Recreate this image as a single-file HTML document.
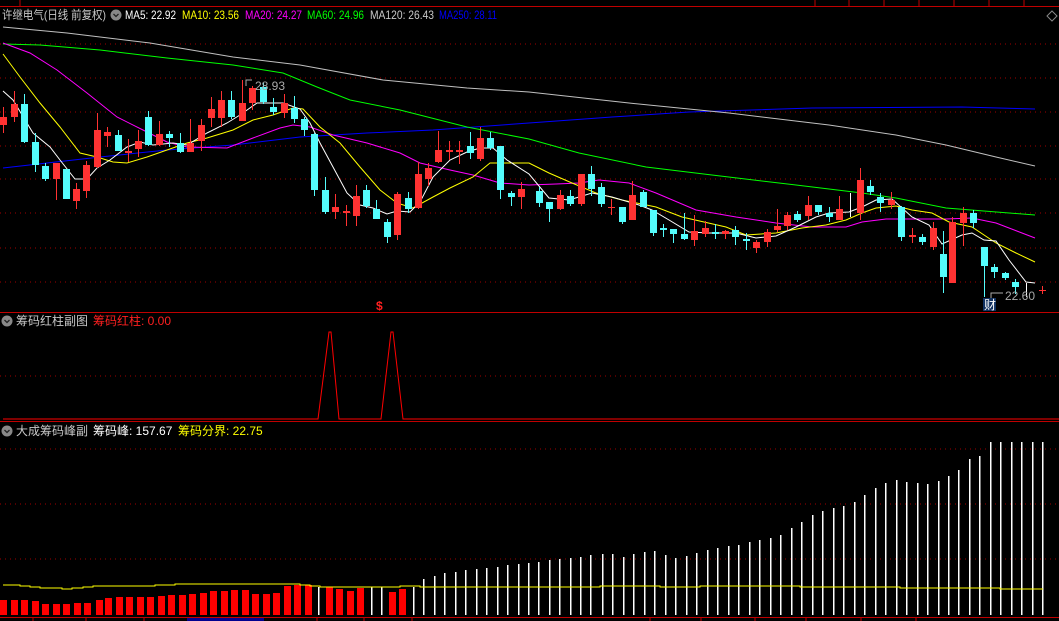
<!DOCTYPE html>
<html><head><meta charset="utf-8">
<style>
html,body{margin:0;padding:0;background:#000;width:1059px;height:621px;overflow:hidden}
svg{display:block}
text{font-family:"Liberation Sans","Noto Sans CJK SC",sans-serif;font-size:12px}
</style></head>
<body>
<svg id="s" width="1059" height="621" xmlns="http://www.w3.org/2000/svg">
<rect width="1059" height="621" fill="#000"/>
<line x1="0" y1="6.5" x2="1059" y2="6.5" stroke="#c00000" stroke-width="1"/>
<line x1="20" y1="0" x2="20" y2="6" stroke="#c00000"/>
<g stroke="#c00000"><line x1="815" y1="0" x2="815" y2="6"/><line x1="849" y1="0" x2="849" y2="6"/><line x1="884" y1="0" x2="884" y2="6"/><line x1="919" y1="0" x2="919" y2="6"/><line x1="954" y1="0" x2="954" y2="6"/><line x1="989" y1="0" x2="989" y2="6"/><line x1="1024" y1="0" x2="1024" y2="6"/></g>
<polygon points="1052,11 1057,16 1052,21 1047,16" fill="none" stroke="#888"/>
<text x="2" y="19" fill="#c8c8c8" font-size="13" textLength="104" lengthAdjust="spacingAndGlyphs">许继电气(日线 前复权)</text>
<circle cx="116" cy="15" r="5.5" fill="#888"/>
<polyline points="113.5,14 116,16.5 118.5,14" fill="none" stroke="#222" stroke-width="1.3"/>
<text x="125" y="19" fill="#fff" textLength="51" lengthAdjust="spacingAndGlyphs">MA5: 22.92</text>
<text x="182" y="19" fill="#ffff00" textLength="57" lengthAdjust="spacingAndGlyphs">MA10: 23.56</text>
<text x="245" y="19" fill="#ff00ff" textLength="57" lengthAdjust="spacingAndGlyphs">MA20: 24.27</text>
<text x="307" y="19" fill="#00ff00" textLength="57" lengthAdjust="spacingAndGlyphs">MA60: 24.96</text>
<text x="370" y="19" fill="#c8c8c8" textLength="64" lengthAdjust="spacingAndGlyphs">MA120: 26.43</text>
<text x="439" y="19" fill="#0000ff" textLength="58" lengthAdjust="spacingAndGlyphs">MA250: 28.11</text>
<g id="grid"></g>
<g id="lines"></g>
<g id="candles"></g>
<polyline points="246,86 246,80 252,80" fill="none" stroke="#aaa"/>
<text x="255" y="90" fill="#aaa">28.93</text>
<polyline points="991,298 991,293 1003,293" fill="none" stroke="#aaa"/>
<text x="1005" y="300" fill="#aaa">22.60</text>
<rect x="983" y="298" width="13" height="13" fill="#103060"/>
<text x="984" y="309" fill="#fff" font-size="11">财</text>
<text x="376" y="310" fill="#ff2020" font-size="11" font-weight="bold">$</text>
<line x1="0" y1="312.5" x2="1059" y2="312.5" stroke="#c00000"/>
<circle cx="7" cy="321" r="5.5" fill="#888"/>
<polyline points="4.5,320 7,322.5 9.5,320" fill="none" stroke="#222" stroke-width="1.3"/>
<text x="16" y="325" fill="#c8c8c8" font-size="13">筹码红柱副图</text>
<text x="93" y="325" fill="#ff2020" font-size="13">筹码红柱: 0.00</text>
<line x1="0" y1="376" x2="1059" y2="376" stroke="#a00000" stroke-dasharray="1,4"/>
<polyline points="3,419 318,419 329,332 331,332 339,419 381,419 391,332 393,332 403,419 1059,419" fill="none" stroke="#ff0000" stroke-width="1"/>
<line x1="0" y1="421.5" x2="1059" y2="421.5" stroke="#c00000"/>
<circle cx="7" cy="431" r="5.5" fill="#888"/>
<polyline points="4.5,430 7,432.5 9.5,430" fill="none" stroke="#222" stroke-width="1.3"/>
<text x="16" y="435" fill="#c8c8c8" font-size="13">大成筹码峰副</text>
<text x="93" y="435" fill="#fff" font-size="13">筹码峰: 157.67</text>
<text x="178" y="435" fill="#ffff00" font-size="13">筹码分界: 22.75</text>
<g stroke="#a00000" stroke-dasharray="1,4"><line x1="0" y1="449" x2="1059" y2="449"/><line x1="0" y1="504" x2="1059" y2="504"/><line x1="0" y1="559" x2="1059" y2="559"/></g>
<g id="bars"></g>
<polyline points="3,585 20,585 20,586 30,586 30,587 40,587 40,588 62,588 62,589 72,589 72,588 83,588 83,587 93,587 93,586 155,586 155,585 175,585 175,584 300,584 300,585 310,585 310,586 320,586 320,587 400,587 400,586 420,586 420,587 600,587 600,586 660,586 660,587 700,587 700,586 800,586 800,587 900,587 900,588 1000,588 1000,589 1043,589" fill="none" stroke="#ffff00" stroke-width="1"/>
<line x1="0" y1="617.5" x2="1059" y2="617.5" stroke="#c00000"/>
<g stroke="#c00000"><line x1="33" y1="617" x2="33" y2="621"/><line x1="86" y1="617" x2="86" y2="621"/><line x1="144" y1="617" x2="144" y2="621"/><line x1="317" y1="617" x2="317" y2="621"/><line x1="364" y1="617" x2="364" y2="621"/><line x1="412" y1="617" x2="412" y2="621"/><line x1="650" y1="617" x2="650" y2="621"/><line x1="701" y1="617" x2="701" y2="621"/><line x1="755" y1="617" x2="755" y2="621"/><line x1="806" y1="617" x2="806" y2="621"/><line x1="861" y1="617" x2="861" y2="621"/><line x1="916" y1="617" x2="916" y2="621"/></g>
<rect x="187" y="618" width="77" height="3" fill="#000090"/>
</svg>
<script>
var NS="http://www.w3.org/2000/svg";
function el(p,t,a){var e=document.createElementNS(NS,t);for(var k in a)e.setAttribute(k,a[k]);p.appendChild(e);return e;}
var g=document.getElementById('grid');
[44,78,112,146,179,213,248,282].forEach(function(y){el(g,'line',{x1:0,y1:y,x2:1059,y2:y,stroke:'#a00000','stroke-dasharray':'1,4'});});
var L=document.getElementById('lines');
function pl(pts,c){el(L,'polyline',{points:pts,fill:'none',stroke:c,'stroke-width':1});}
pl("3,168 100,157 167,150 233,145 300,137 367,133 433,130 529,123 612,117 689,112 812,108 962,107 1035,109","#0000ff");
pl("3,27 67,33 150,43 233,57 300,65 383,80 467,88 529,92 629,103 729,113 829,125 896,135 946,145 996,157 1035,166","#c0c0c0");
pl("3,44 40,45 100,50 167,58 233,65 283,73 317,87 350,100 400,110 467,127 529,139 579,153 646,167 712,175 796,185 862,193 896,198 946,208 1035,215","#00ff00");
pl("3,43 30,53 57,70 87,93 117,117 143,130 167,142 187,147 227,148 253,138 280,128 293,125 310,127 333,135 367,143 400,153 420,163 450,170 473,175 500,183 529,185 556,184 579,183 599,180 629,183 656,193 696,210 736,217 776,223 812,227 846,227 862,222 886,219 946,219 972,218 996,223 1035,238","#ff00ff");
pl("3,54 20,77 40,103 60,127 80,153 97,157 113,162 127,163 147,157 167,150 187,143 207,138 233,130 253,120 273,115 293,108 303,109 320,127 340,143 360,167 380,190 397,203 413,208 433,197 450,188 473,177 490,163 510,163 529,163 549,173 572,183 596,193 622,200 656,207 682,217 726,227 746,235 776,233 802,228 826,225 846,220 862,213 876,208 896,206 912,210 932,213 949,222 972,227 996,243 1016,253 1035,262","#ffff00");
pl("3,91 13,100 33,133 50,147 60,160 75,179 87,179 97,168 110,160 127,147 140,142 153,145 173,143 187,145 207,133 227,123 240,115 257,103 270,103 283,103 300,109 310,123 320,143 333,167 347,193 360,205 373,208 387,214 397,211 410,212 420,202 433,177 450,160 467,152 480,148 493,148 507,160 529,174 549,198 569,200 592,193 612,197 639,205 652,210 669,220 689,232 709,233 736,233 756,238 776,236 796,227 816,217 829,213 849,212 862,207 876,200 892,199 912,217 929,225 942,244 962,235 972,233 984,240 996,241 1009,260 1026,282 1035,283","#ffffff");
var C=[
[3,117,125,107,133,'r'],[14,104,117,91,122,'r'],[24,104,142,94,143,'c'],[35,142,165,133,172,'c'],[45,166,179,163,181,'c'],[56,163,179,163,200,'r'],[66,169,199,169,199,'c'],[76,189,201,183,209,'r'],[86,165,191,161,198,'r'],[97,130,167,113,168,'r'],
[107,132,136,127,147,'r'],[118,135,151,130,151,'c'],[128,151,153,139,162,'r'],[138,141,149,130,157,'r'],[148,117,145,111,146,'c'],[159,134,145,121,146,'r'],[169,134,138,131,147,'c'],[180,143,152,133,153,'c'],[190,143,152,119,152,'r'],[201,125,141,119,151,'r'],
[211,109,118,97,127,'r'],[221,100,118,91,127,'r'],[231,100,117,91,119,'c'],[242,103,121,80,121,'r'],[252,88,103,86,110,'r'],[263,87,102,83,104,'c'],[273,107,112,98,115,'c'],[284,103,113,94,118,'r'],[294,108,119,96,123,'c'],[304,119,130,117,136,'c'],
[314,134,190,133,196,'c'],[325,190,212,177,214,'c'],[335,207,212,194,219,'r'],[346,211,213,205,226,'r'],[356,196,216,185,226,'r'],[366,190,206,185,208,'c'],[376,209,219,200,219,'c'],[387,222,237,219,243,'c'],[397,194,235,192,240,'r'],[408,198,209,192,213,'c'],
[418,174,208,162,209,'r'],[428,168,179,163,186,'r'],[438,150,162,131,163,'r'],[449,150,152,141,160,'r'],[459,150,152,141,164,'r'],[470,146,153,132,159,'c'],[480,138,159,127,161,'r'],[490,138,148,132,150,'c'],[500,146,190,146,199,'c'],[511,193,197,191,206,'c'],
[521,189,197,182,209,'r'],[539,191,203,187,207,'c'],[549,202,209,202,222,'c'],[560,195,209,190,210,'r'],[570,196,204,190,206,'c'],[581,174,204,174,206,'r'],[591,174,189,166,196,'c'],[601,187,204,183,207,'c'],[611,207,208,199,215,'r'],[622,207,222,207,224,'c'],
[632,195,220,181,220,'r'],[643,192,207,190,207,'c'],[653,210,233,210,236,'c'],[663,228,230,224,237,'c'],[673,229,234,229,243,'c'],[684,234,239,213,240,'c'],[694,231,240,215,246,'r'],[705,228,234,221,237,'r'],[715,232,234,224,239,'c'],[725,231,234,230,239,'r'],
[735,230,237,226,245,'c'],[746,239,241,233,250,'c'],[756,242,248,240,253,'r'],[767,232,242,229,247,'r'],[777,226,230,209,232,'r'],[787,215,226,212,230,'r'],[797,214,220,211,222,'c'],[808,205,216,196,220,'r'],[818,205,212,205,215,'c'],[829,213,217,207,222,'c'],
[839,209,220,196,220,'r'],[850,205,206,193,217,'w'],[860,180,213,168,220,'r'],[870,186,192,180,195,'c'],[880,197,203,193,212,'c'],[891,200,205,192,209,'r'],[901,207,237,206,241,'c'],[912,235,237,228,243,'r'],[922,237,242,234,245,'c'],[933,228,247,222,250,'r'],
[943,254,277,231,293,'c'],[952,222,283,217,283,'r'],[963,213,223,207,246,'r'],[973,213,223,210,228,'c'],[984,247,266,247,297,'c'],[994,267,272,264,278,'c'],[1005,273,278,272,280,'c'],[1015,282,287,279,294,'c'],[1026,290,290,283,297,'w'],[1042,290,290,286,294,'r']];
var K=document.getElementById('candles');
C.forEach(function(d){var col=d[5]=='r'?'#ff3232':(d[5]=='c'?'#54fcfc':'#ffffff');
el(K,'line',{x1:d[0]+0.5,y1:d[3],x2:d[0]+0.5,y2:d[4],stroke:col});
var h=Math.max(1,d[2]-d[1]);var w=(d[5]=='w')?1:7;
if(d[0]==1042){el(K,'line',{x1:d[0]-3,y1:290.5,x2:d[0]+4,y2:290.5,stroke:col});return;}
el(K,'rect',{x:d[0]-(w-1)/2,y:d[1],width:w,height:h,fill:col});});
var B=document.getElementById('bars');
var lx=[3,14,24,35,45,56,66,77,87,99,108,119,129,140,150,161,171,182,192,203,213,224,234,245,255,266,276,287,297,308,318,329,339,350,360,371,381,392,402,413,423,434,444];
var lt=[600,600,600,601,604,604,604,603,603,600,598,597,597,597,597,596,595,595,594,593,591,591,590,590,594,594,593,586,585,585,587,587,589,591,588,587,587,592,589,587,579,576,573];
var lc="rrrrrrrrrrrrrrrrrrrrrrrrrrrrrrwrrrrwwrrwwww";
for(var i=0;i<lx.length;i++){if(lc[i]=='r')el(B,'rect',{x:lx[i]-3,y:lt[i],width:7,height:615-lt[i],fill:'#ff0000'});else el(B,'rect',{x:lx[i],y:lt[i],width:1.5,height:615-lt[i],fill:'#fff'});}
for(var x=455,j=0;x<597;x+=10.42,j++){var t=Math.round(573-(x-444)/(602-444)*19);el(B,'rect',{x:Math.round(x),y:t,width:1.5,height:615-t,fill:'#fff'});}
var rx=[602,612,623,633,644,654,665,675,686,696,707,717,728,738,749,759,770,780,791,801,812,822,833,843,854,864,875,885,896,906,917,927,938,948,958,969,979,990,1000,1011,1021,1032,1042];
var rt=[554,554,557,554,552,551,555,558,556,553,550,548,546,545,542,540,538,535,528,522,515,511,508,506,502,495,488,483,480,482,483,484,481,476,470,459,456,442,442,442,442,442,442];
for(i=0;i<rx.length;i++)el(B,'rect',{x:rx[i],y:rt[i],width:1.5,height:615-rt[i],fill:'#fff'});
</script>
</body></html>
